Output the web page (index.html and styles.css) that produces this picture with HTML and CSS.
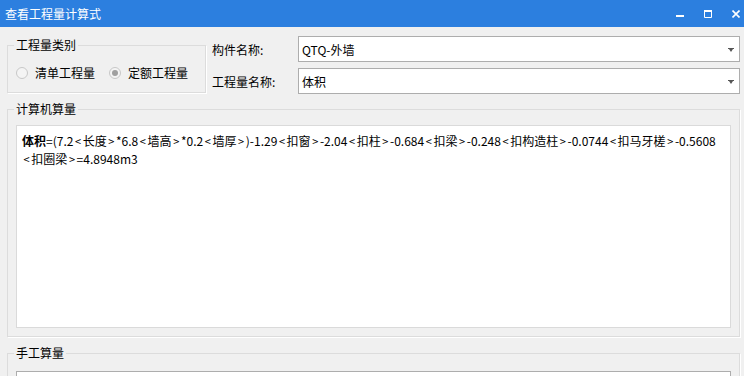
FILE: index.html
```html
<!DOCTYPE html>
<html lang="zh-CN">
<head>
<meta charset="UTF-8" />
<title>查看工程量计算式</title>
<link rel="stylesheet" href="styles.css">
</head>
<body>

<div class="window">
  <div class="titlebar">
    <span class="title">查看工程量计算式</span>
    <div class="controls">
      <svg width="8" height="8" viewBox="0 0 8 8"><rect x="0" y="5" width="8" height="2" fill="#fff"/></svg>
      <svg width="8" height="8" viewBox="0 0 8 8"><path d="M0.5 1.5h7v6h-7z" fill="none" stroke="#fff"/><rect x="0" y="0" width="8" height="2" fill="#fff"/></svg>
      <svg width="8" height="8" viewBox="0 0 8 8"><path d="M0.5 0.5l7 7M7.5 0.5l-7 7" stroke="#fff" stroke-width="1.6"/></svg>
    </div>
  </div>

  <div class="top-row">
    <fieldset class="group group-type">
      <legend>工程量类别</legend>
      <div class="radios">
        <label class="radio"><span class="radio-circle"></span>清单工程量</label>
        <label class="radio radio-checked"><span class="radio-circle"></span>定额工程量</label>
      </div>
    </fieldset>

    <div class="fields">
      <div class="field">
        <span class="field-label">构件名称:</span>
        <div class="combo">
          <span>QTQ-外墙</span>
          <svg class="combo-arrow" width="6" height="4" viewBox="0 0 6 4"><path d="M0 0h6v1h-1l-2 3-2-3h-1z" fill="#555"/></svg>
        </div>
      </div>
      <div class="field">
        <span class="field-label">工程量名称:</span>
        <div class="combo">
          <span>体积</span>
          <svg class="combo-arrow" width="6" height="4" viewBox="0 0 6 4"><path d="M0 0h6v1h-1l-2 3-2-3h-1z" fill="#555"/></svg>
        </div>
      </div>
    </div>
  </div>

  <fieldset class="group group-auto">
    <legend>计算机算量</legend>
    <div class="textbox"><b>体积</b>=(7.2<span class="ab">&lt;</span>长度<span class="ab">&gt;</span>*6.8<span class="ab">&lt;</span>墙高<span class="ab">&gt;</span>*0.2<span class="ab">&lt;</span>墙厚<span class="ab">&gt;</span>)-1.29<span class="ab">&lt;</span>扣窗<span class="ab">&gt;</span>-2.04<span class="ab">&lt;</span>扣柱<span class="ab">&gt;</span>-0.684<span class="ab">&lt;</span>扣梁<span class="ab">&gt;</span>-0.248<span class="ab">&lt;</span>扣构造柱<span class="ab">&gt;</span>-0.0744<span class="ab">&lt;</span>扣马牙槎<span class="ab">&gt;</span>-0.5608<span class="ab">&lt;</span>扣圈梁<span class="ab">&gt;</span>=4.8948m3</div>
  </fieldset>

  <fieldset class="group group-manual">
    <legend>手工算量</legend>
    <div class="textbox textbox-manual"></div>
  </fieldset>
</div>

</body>
</html>
```

FILE: styles.css
```css
/* Window */
html, body {
  margin: 0;
  height: 100%;
  overflow: hidden;
}

body {
  background: #f0f0f0;
  font-family: "Noto Sans CJK SC", "Liberation Sans", sans-serif;
  font-size: 12px;
  color: #000;
}

.titlebar {
  height: 27px;
  background: #2c7fdf;
  color: #fff;
  display: flex;
  align-items: center;
  justify-content: space-between;
  padding-left: 5px;
}

.controls {
  display: flex;
  gap: 20px;
  margin-right: 4px;
  margin-top: 1px;
}

.controls svg {
  display: block;
}

/* Group boxes */
.group {
  border: 1px solid #dcdcdc;
  box-shadow: 1px 1px 0 #fff;
  margin: 0;
  min-width: 0;
}

.group legend {
  padding: 0 2px;
  margin-left: -2px;
  line-height: 16px;
}

/* Top row */
.top-row {
  display: flex;
  align-items: flex-start;
  padding-top: 9px;
}

.group-type {
  margin: 1px 0 0 7px;
  width: 199px;
  box-sizing: border-box;
  padding: 12px 8px 11px 8px;
}

.radios {
  display: flex;
  gap: 14px;
}

.radio {
  display: flex;
  align-items: center;
  gap: 7px;
  height: 16px;
  line-height: 16px;
}

.radio-circle {
  width: 12px;
  height: 12px;
  box-sizing: border-box;
  border: 1px solid #c8c8c8;
  border-radius: 50%;
  background: #f4f4f4;
  position: relative;
}

.radio-checked .radio-circle::after {
  content: "";
  position: absolute;
  left: 2px;
  top: 2px;
  width: 6px;
  height: 6px;
  border-radius: 50%;
  background: #a0a0a0;
}

.fields {
  flex: 1;
  margin: 0 4px 0 6px;
  display: flex;
  flex-direction: column;
  gap: 6px;
}

.field {
  display: flex;
  align-items: center;
}

.field-label {
  width: 86px;
  flex-shrink: 0;
}

.combo {
  flex: 1;
  height: 26px;
  box-sizing: border-box;
  border: 1px solid #adadad;
  background: #fff;
  display: flex;
  align-items: center;
  justify-content: space-between;
  padding: 0 5px 0 3px;
}

.combo-arrow {
  display: block;
  margin-top: 1px;
}

/* Calculation groups */
.group-auto {
  margin: 7px 4px 0 7px;
  padding: 8px;
}

/* window is cut off just below the manual box's top edge */
.group-manual {
  margin: 8px 4px 0 7px;
  padding: 10px 8px 0;
  border-bottom: none;
}

.textbox {
  height: 203px;
  box-sizing: border-box;
  border: 1px solid #dadada;
  background: #fff;
  padding: 6px 5px;
  line-height: 17px;
  word-break: break-all;
}

.textbox b {
  font-weight: bold;
}

/* angle brackets in the formula are set a little apart */
.ab {
  margin: 0 1.6px;
  font-size: 11px;
}

.textbox-manual {
  height: 5px;
  border-color: #adadad;
  border-bottom: none;
}
```
